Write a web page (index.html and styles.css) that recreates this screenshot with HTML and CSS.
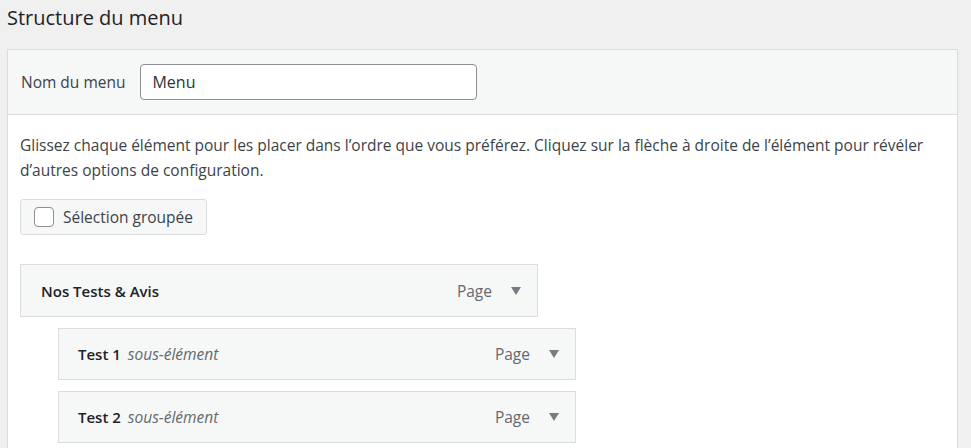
FILE: index.html
```html
<!DOCTYPE html>
<html lang="fr">
<head>
<meta charset="utf-8">
<title>Structure du menu</title>
<link rel="stylesheet" href="styles.css">
</head>
<body>
<div class="wrap">
  <h2 class="title">Structure du menu</h2>
  <div class="panel">
    <div class="panel-header">
      <label class="name-label" for="menu-name">Nom du menu</label>
      <input class="name-input" id="menu-name" type="text" value="Menu">
    </div>
    <div class="panel-body">
      <p class="instructions">Glissez chaque élément pour les placer dans l’ordre que vous préférez. Cliquez sur la flèche à droite de l’élément pour révéler d’autres options de configuration.</p>
      <div class="bulk">
        <span class="checkbox"></span>
        <span class="bulk-label">Sélection groupée</span>
      </div>
      <ul class="menu-items">
        <li class="item">
          <span class="item-title">Nos Tests &amp; Avis</span>
          <span class="item-type">Page</span>
          <svg class="arrow" width="10" height="8" viewBox="0 0 10 8"><polygon points="0,0 10,0 5,8" fill="#787c82"/></svg>
        </li>
        <li class="item sub">
          <span class="item-title">Test 1</span>
          <span class="item-sub">sous-élément</span>
          <span class="item-type">Page</span>
          <svg class="arrow" width="10" height="8" viewBox="0 0 10 8"><polygon points="0,0 10,0 5,8" fill="#787c82"/></svg>
        </li>
        <li class="item sub">
          <span class="item-title">Test 2</span>
          <span class="item-sub">sous-élément</span>
          <span class="item-type">Page</span>
          <svg class="arrow" width="10" height="8" viewBox="0 0 10 8"><polygon points="0,0 10,0 5,8" fill="#787c82"/></svg>
        </li>
      </ul>
    </div>
  </div>
</div>
</body>
</html>
```
FILE: styles.css
```css
html, body {
  margin: 0;
  padding: 0;
  background: #f0f0f1;
  font-family: "Open Sans", "Noto Sans", sans-serif;
  color: #3c434a;
}
.wrap {
  padding: 4px 13px 0 7px;
}
.title {
  margin: 0 0 17px;
  font-size: 20px;
  line-height: 28px;
  font-weight: 400;
  color: #1d2327;
}
.panel {
  border: 1px solid #dcdcde;
  background: #fff;
}
.panel-header {
  display: flex;
  align-items: center;
  gap: 15px;
  padding: 14px 13px;
  background: #f6f7f7;
  border-bottom: 1px solid #dcdcde;
}
.name-label {
  font-size: 15.5px;
}
.name-input {
  box-sizing: border-box;
  width: 337px;
  height: 36px;
  margin: 0;
  padding: 0 11px;
  border: 1px solid #8c8f94;
  border-radius: 4px;
  background: #fff;
  font-family: inherit;
  font-size: 16px;
  color: #2c3338;
}
.panel-body {
  padding: 18px 12px 20px;
  min-height: 300px;
}
.instructions {
  margin: 0;
  font-size: 15.5px;
  line-height: 25px;
}
.bulk {
  box-sizing: border-box;
  display: inline-flex;
  align-items: center;
  gap: 9px;
  height: 36px;
  margin-top: 16px;
  padding: 0 13px 0 13px;
  background: #f6f7f7;
  border: 1px solid #dcdcde;
  border-radius: 3px;
}
.checkbox {
  box-sizing: border-box;
  width: 20px;
  height: 20px;
  border: 1px solid #8c8f94;
  border-radius: 4px;
  background: #fff;
}
.bulk-label {
  font-size: 15.5px;
}
.menu-items {
  list-style: none;
  margin: 29px 0 0;
  padding: 0;
  display: flex;
  flex-direction: column;
  gap: 11px;
}
.item {
  box-sizing: border-box;
  display: flex;
  align-items: center;
  width: 518px;
  height: 53px;
  padding: 0 16px 0 20px;
  background: #f6f7f7;
  border: 1px solid #dcdcde;
}
.item.sub {
  margin-left: 38px;
  height: 52px;
  padding-left: 19px;
}
.item-title {
  font-size: 15px;
  font-weight: 600;
  color: #1d2327;
}
.item-sub {
  margin-left: 7px;
  font-size: 15.5px;
  font-style: italic;
  color: #646970;
}
.item-type {
  margin-left: auto;
  margin-right: 19px;
  font-size: 15.5px;
  color: #646970;
}
.arrow {
  display: block;
}
```
